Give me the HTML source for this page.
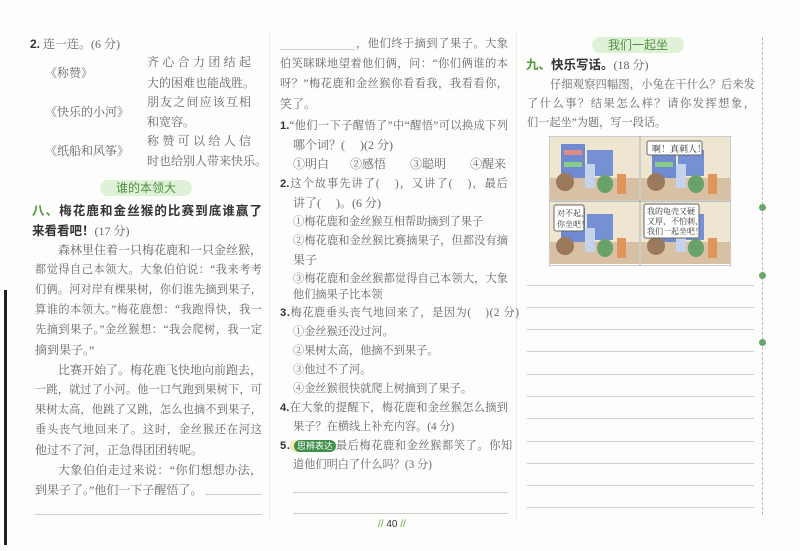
<!DOCTYPE html>
<html><head><meta charset="utf-8"><style>
body{margin:0;background:#fff;}
#p{position:relative;width:800px;height:551px;overflow:hidden;background:#fdfdfc;font-family:"Liberation Serif","Noto Serif CJK SC",serif;color:#666;font-size:12px;}
.l{position:absolute;white-space:nowrap;line-height:14px;height:14px;}
.j{text-align:justify;text-align-last:justify;white-space:normal;overflow:hidden;}
.b{font-family:"Liberation Sans","Noto Sans CJK SC",sans-serif;font-weight:bold;color:#333;}
.g{color:#4a9a3a;}
.pill{position:absolute;background:#dff2d8;border-radius:9px;color:#4f8f3f;font-family:"Liberation Sans","Noto Sans CJK SC",sans-serif;font-size:12px;text-align:center;line-height:16px;height:16px;}
.hl{position:absolute;height:1px;background:#cfcfcf;}
.num{font-family:"Liberation Sans",sans-serif;font-weight:bold;color:#333;}
.dot{position:absolute;width:7px;height:7px;border-radius:50%;background:#6aa66a;left:759px;}
.s{font-size:11.2px;}
</style></head><body><div id="p">
<div style="position:absolute;left:4px;top:290px;width:3px;height:255px;background:#222"></div>
<div style="position:absolute;left:269px;top:30px;width:1px;height:490px;background:#eee"></div>
<div style="position:absolute;left:516px;top:30px;width:1px;height:490px;background:#eee"></div>
<div style="position:absolute;left:762px;top:37px;height:478px;border-left:1px dashed #bbb"></div>
<div class="dot" style="top:204px"></div><div class="dot" style="top:272px"></div><div class="dot" style="top:339px"></div>

<!-- left column -->
<div class="l" style="left:30px;top:37px"><span class="num">2.</span> 连一连。(6 分)</div>
<div class="l" style="left:45px;top:66px">《称赞》</div>
<div class="l" style="left:45px;top:105px">《快乐的小河》</div>
<div class="l" style="left:45px;top:144px">《纸船和风筝》</div>
<div class="l j" style="left:147px;top:55px;width:104px">齐心合力团结起来，再</div>
<div class="l" style="left:147px;top:76px">大的困难也能战胜。</div>
<div class="l j" style="left:147px;top:95px;width:104px">朋友之间应该互相理解</div>
<div class="l" style="left:147px;top:115px">和宽容。</div>
<div class="l j" style="left:147px;top:134px;width:104px">称赞可以给人信心，同</div>
<div class="l" style="left:147px;top:154px">时也给别人带来快乐。</div>
<div class="pill" style="left:100px;top:180px;width:92px">谁的本领大</div>
<div class="l j b" style="left:32px;top:204px;width:230px;font-size:12.5px"><span class="g">八、</span>梅花鹿和金丝猴的比赛到底谁赢了呢？一起</div>
<div class="l b" style="left:32px;top:224px;font-size:12.5px">来看看吧！<span style="font-weight:normal;color:#666;font-family:'Liberation Serif','Noto Serif CJK SC',serif;font-size:12px">(17 分)</span></div>
<div class="l j" style="left:58px;top:243px;width:204px">森林里住着一只梅花鹿和一只金丝猴，他俩</div>
<div class="l j s" style="left:35px;top:263px;width:227px">都觉得自己本领大。大象伯伯说：“我来考考你</div>
<div class="l j s" style="left:35px;top:283px;width:227px">们俩。河对岸有棵果树，你们谁先摘到果子，就</div>
<div class="l j s" style="left:35px;top:303px;width:227px">算谁的本领大。”梅花鹿想：“我跑得快，我一定能</div>
<div class="l j s" style="left:35px;top:323px;width:227px">先摘到果子。”金丝猴想：“我会爬树，我一定能先</div>
<div class="l" style="left:35px;top:343px">摘到果子。”</div>
<div class="l j" style="left:58px;top:363px;width:204px">比赛开始了。梅花鹿飞快地向前跑去，轻轻</div>
<div class="l j s" style="left:35px;top:383px;width:227px">一跳，就过了小河。他一口气跑到果树下，可是</div>
<div class="l j s" style="left:35px;top:403px;width:227px">果树太高，他跳了又跳，怎么也摘不到果子，只好</div>
<div class="l j s" style="left:35px;top:423px;width:227px">垂头丧气地回来了。这时，金丝猴还在河这边，</div>
<div class="l" style="left:35px;top:443px">他过不了河，正急得团团转呢。</div>
<div class="l j" style="left:58px;top:463px;width:204px">大象伯伯走过来说：“你们想想办法，就能摘</div>
<div class="l" style="left:35px;top:483px">到果子了。”他们一下子醒悟了。</div>
<div class="hl" style="left:205px;top:494px;width:57px"></div>
<div class="hl" style="left:35px;top:514px;width:227px"></div>

<!-- middle column -->
<div class="hl" style="left:280px;top:49px;width:75px"></div>
<div class="l j s" style="left:356px;top:37px;width:152px">，他们终于摘到了果子。大象伯</div>
<div class="l j s" style="left:280px;top:57px;width:228px">伯笑眯眯地望着他们俩，问：“你们俩谁的本领大</div>
<div class="l j s" style="left:280px;top:77px;width:228px">呀？”梅花鹿和金丝猴你看看我，我看看你，都</div>
<div class="l" style="left:280px;top:97px">笑了。</div>
<div class="l j s" style="left:280px;top:119px;width:228px"><span class="num">1.</span>“他们一下子醒悟了”中“醒悟”可以换成下列</div>
<div class="l" style="left:293px;top:138px">哪个词？(&nbsp;&nbsp;&nbsp;&nbsp;&nbsp;)(2 分)</div>
<div class="l" style="left:293px;top:157px">①明白</div><div class="l" style="left:350px;top:157px">②感悟</div><div class="l" style="left:410px;top:157px">③聪明</div><div class="l" style="left:470px;top:157px">④醒来</div>
<div class="l j s" style="left:280px;top:177px;width:228px"><span class="num">2.</span>这个故事先讲了(&nbsp;&nbsp;&nbsp;&nbsp;)，又讲了(&nbsp;&nbsp;&nbsp;&nbsp;)，最后</div>
<div class="l" style="left:293px;top:196px">讲了(&nbsp;&nbsp;&nbsp;&nbsp;&nbsp;)。(6 分)</div>
<div class="l s" style="left:293px;top:215px">①梅花鹿和金丝猴互相帮助摘到了果子</div>
<div class="l j s" style="left:293px;top:234px;width:215px">②梅花鹿和金丝猴比赛摘果子，但都没有摘到</div>
<div class="l" style="left:293px;top:253px">果子</div>
<div class="l j s" style="left:293px;top:272px;width:215px">③梅花鹿和金丝猴都觉得自己本领大，大象让</div>
<div class="l s" style="left:293px;top:288px">他们摘果子比本领</div>
<div class="l s" style="left:280px;top:306px;letter-spacing:0.6px"><span class="num">3.</span>梅花鹿垂头丧气地回来了，是因为(&nbsp;&nbsp;&nbsp;&nbsp;)(2 分)</div>
<div class="l s" style="left:293px;top:325px">①金丝猴还没过河。</div>
<div class="l s" style="left:293px;top:344px">②果树太高，他摘不到果子。</div>
<div class="l s" style="left:293px;top:363px">③他过不了河。</div>
<div class="l s" style="left:293px;top:382px">④金丝猴很快就爬上树摘到了果子。</div>
<div class="l j s" style="left:280px;top:401px;width:228px"><span class="num">4.</span>在大象的提醒下，梅花鹿和金丝猴怎么摘到了</div>
<div class="l s" style="left:293px;top:420px">果子？在横线上补充内容。(4 分)</div>
<div class="l s" style="left:280px;top:439px;letter-spacing:0.6px"><span class="num">5.</span> <span style="display:inline-block;background:#3f8f4a;color:#fff;border-radius:7px;font-family:'Liberation Sans','Noto Sans CJK SC',sans-serif;font-size:9px;line-height:12px;padding:0 3px;letter-spacing:0;box-shadow:-4px 0 0 #f3e8b0">思辨表达</span>最后梅花鹿和金丝猴都笑了。你知</div>
<div class="l s" style="left:293px;top:458px">道他们明白了什么吗？(3 分)</div>
<div class="hl" style="left:293px;top:492px;width:215px"></div>
<div class="hl" style="left:293px;top:513px;width:215px"></div>
<div class="l" style="left:378px;top:518px;font-family:'Liberation Sans',sans-serif;font-size:10px;color:#333"><span style="color:#6a3">//</span> 40 <span style="color:#6a3">//</span></div>

<!-- right column -->
<div class="pill" style="left:592px;top:37px;width:92px">我们一起坐</div>
<div class="l b" style="left:526px;top:58px;font-size:12.5px"><span class="g">九、</span>快乐写话。<span style="font-weight:normal;color:#666;font-family:'Liberation Serif','Noto Serif CJK SC',serif;font-size:12px">(18 分)</span></div>
<div class="l j s" style="left:550px;top:78px;width:205px">仔细观察四幅图，小兔在干什么？后来发生</div>
<div class="l j s" style="left:527px;top:97px;width:228px">了什么事？结果怎么样？请你发挥想象，以“我</div>
<div class="l s" style="left:527px;top:116px">们一起坐”为题，写一段话。</div>
<svg style="position:absolute;left:549px;top:136px" width="182" height="130" viewBox="0 0 182 130">
<rect width="182" height="130" fill="#fff" stroke="#999"/>
<g id="pn">
<rect x="1" y="1" width="89" height="63" fill="#efe6d2"/>
<rect x="1" y="42" width="89" height="22" fill="#d8c0a4"/>
<rect x="12" y="8" width="24" height="34" fill="#6f8ad0"/>
<rect x="38" y="14" width="26" height="26" fill="#7590d4"/>
<rect x="15" y="14" width="18" height="5" fill="#e08a8a"/><rect x="15" y="26" width="18" height="5" fill="#8c8"/>
<circle cx="16" cy="46" r="9" fill="#9a7a5a"/>
<rect x="36" y="28" width="10" height="24" fill="#c4d2ec"/>
<ellipse cx="56" cy="48" rx="8" ry="9" fill="#6aa06a"/>
<rect x="68" y="38" width="9" height="20" fill="#e0965a"/>
</g>
<use href="#pn" x="91"/><use href="#pn" y="64"/><use href="#pn" x="91" y="64"/>
<line x1="91" y1="0" x2="91" y2="130" stroke="#999"/><line x1="0" y1="65" x2="182" y2="65" stroke="#999"/>
<rect x="98" y="5" width="55" height="14" fill="#fff" stroke="#666" rx="2"/>
<text x="103" y="16" font-size="9" fill="#333" font-family="Noto Serif CJK SC">啊！真刺人！</text>
<rect x="5" y="69" width="30" height="26" fill="#fff" stroke="#666" rx="2"/>
<text x="8" y="80" font-size="8" fill="#333" font-family="Noto Serif CJK SC">对不起，</text>
<text x="8" y="91" font-size="8" fill="#333" font-family="Noto Serif CJK SC">你坐吧！</text>
<rect x="95" y="68" width="55" height="34" fill="#fff" stroke="#666" rx="2"/>
<text x="98" y="78" font-size="8" fill="#333" font-family="Noto Serif CJK SC">我的龟壳又硬</text>
<text x="98" y="88" font-size="8" fill="#333" font-family="Noto Serif CJK SC">又厚，不怕刺，</text>
<text x="98" y="98" font-size="8" fill="#333" font-family="Noto Serif CJK SC">我们一起坐吧！</text>
</svg>
<div class="hl" style="left:527px;top:285px;width:227px"></div>
<div class="hl" style="left:527px;top:307px;width:227px"></div>
<div class="hl" style="left:527px;top:329px;width:227px"></div>
<div class="hl" style="left:527px;top:351px;width:227px"></div>
<div class="hl" style="left:527px;top:374px;width:227px"></div>
<div class="hl" style="left:527px;top:396px;width:227px"></div>
<div class="hl" style="left:527px;top:418px;width:227px"></div>
<div class="hl" style="left:527px;top:441px;width:227px"></div>
<div class="hl" style="left:527px;top:463px;width:227px"></div>
<div class="hl" style="left:527px;top:485px;width:227px"></div>
<div class="hl" style="left:527px;top:507px;width:227px"></div>
</div></body></html>
